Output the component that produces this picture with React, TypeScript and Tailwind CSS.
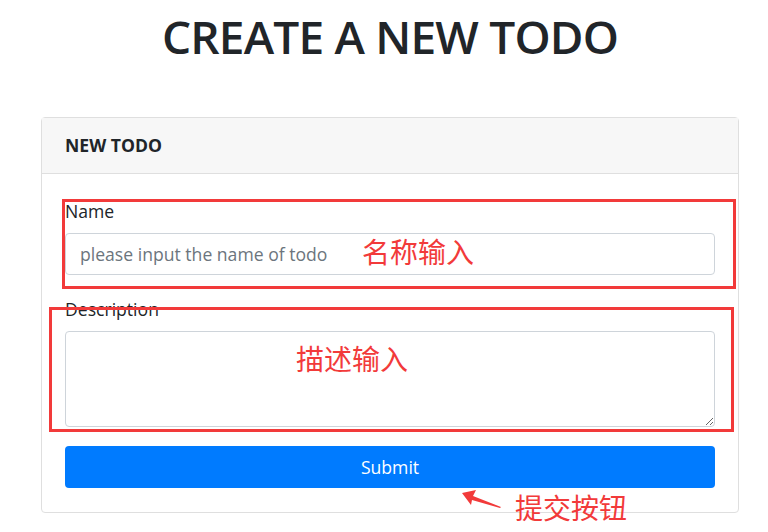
import React from "react";

export default function App() {
  const sans = { fontFamily: '"Open Sans", "Noto Sans", sans-serif' };
  const cjk = { fontFamily: '"Noto Sans CJK SC", sans-serif' };
  return (
    <div className="relative w-[768px] h-[532px] bg-white overflow-hidden" style={sans}>
      <div className="ml-[41px] w-[698px]">
        <h1 className="h-[117px] pt-[4px] text-center text-[46px] leading-[64px] text-[#212529] font-semibold tracking-[-0.8px]">
          CREATE A NEW TODO
        </h1>
        <div className="border border-[#dfdfdf] rounded-[4px]">
          <div className="h-[56px] bg-[#f7f7f7] border-b border-[#dfdfdf] px-[23px] flex items-center text-[17.6px] font-bold text-[#212529]">
            NEW TODO
          </div>
          <div className="px-[23px] pt-[24px] pb-[24px] flex flex-col text-[17.6px]">
            <label className="h-[26px] leading-[26px] text-[#212529]">Name</label>
            <input
              className="mt-[9px] h-[42px] w-full border border-[#ced4da] rounded-[4px] px-[14px] text-[#495057] placeholder-[#6c757d] outline-none"
              placeholder="please input the name of todo"
            />
            <label className="mt-[21px] h-[26px] leading-[26px] text-[#212529]">Description</label>
            <textarea className="mt-[9px] h-[96px] w-full border border-[#ced4da] rounded-[4px] px-[14px] py-[6px] outline-none" />
            <button className="mt-[19px] h-[42px] w-full bg-[#007bff] rounded-[4px] text-white pt-[1px]">
              Submit
            </button>
          </div>
        </div>
      </div>

      {/* annotations */}
      <div className="absolute left-[62px] top-[199px] w-[674px] h-[90px] border-[3px] border-[#f23a3a]" />
      <div className="absolute left-[49px] top-[307px] w-[685px] h-[125px] border-[3px] border-[#f23a3a]" />
      <div className="absolute left-[362px] top-[232px] text-[28px] leading-[38px] text-[#f23a3a]" style={cjk}>名称输入</div>
      <div className="absolute left-[296px] top-[339px] text-[28px] leading-[38px] text-[#f23a3a]" style={cjk}>描述输入</div>
      <div className="absolute left-[515px] top-[488px] text-[28px] leading-[38px] text-[#f23a3a]" style={cjk}>提交按钮</div>
      <svg className="absolute left-[460px] top-[490px]" width="44" height="22" viewBox="0 0 44 22">
        <polygon points="2,3 16,0 13,6 41,17 40,18 12,10 11,15" fill="#f23a3a" />
      </svg>
    </div>
  );
}
